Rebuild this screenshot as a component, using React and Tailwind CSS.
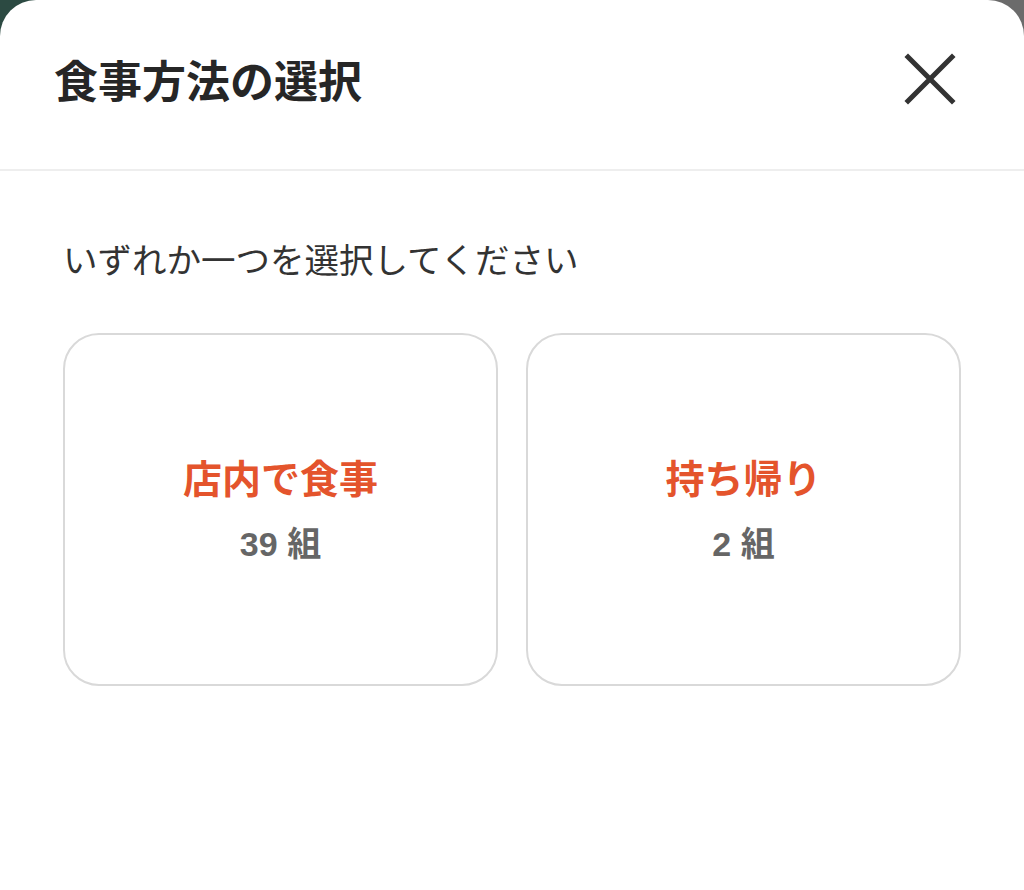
import React, { useState } from 'react';

const options = [
  { id: 'eat_in', label: '店内で食事', count: 39 },
  { id: 'take_out', label: '持ち帰り', count: 2 },
];

export default function App() {
  const [selected, setSelected] = useState(null);

  return (
    <div
      className="h-[890px] w-full overflow-hidden bg-[linear-gradient(to_right,#2c4a42_50%,#6b6b6b_50%)]"
      style={{ fontFamily: '"Noto Sans CJK JP", "Noto Sans", sans-serif' }}
    >
      <div className="flex h-full flex-col rounded-t-[36px] bg-white">
        {/* Header */}
        <div className="flex h-[171px] items-center justify-between border-b-2 border-[#eeeeee] pb-[12px] pl-[54px] pr-[68px]">
          <h2 className="text-[44px] font-bold leading-none text-[#262626]">食事方法の選択</h2>
          <button className="flex h-[52px] w-[52px] items-center justify-center text-[#333333]">
            <svg width="52" height="52" viewBox="0 0 52 52" fill="none">
              <path d="M4 4L48 48M48 4L4 48" stroke="currentColor" strokeWidth="5" strokeLinecap="square" />
            </svg>
          </button>
        </div>

        {/* Body */}
        <div className="px-[63px] pt-[62px]">
          <p className="text-[34.5px] leading-[51px] text-[#333333]">いずれか一つを選択してください</p>

          <div className="mt-[49px] grid grid-cols-2 gap-[28px]">
            {options.map((opt) => (
              <button
                key={opt.id}
                onClick={() => setSelected(opt.id)}
                className={`flex h-[353px] flex-col items-center justify-center rounded-[36px] border-2 bg-white pb-[3px] ${
                  selected === opt.id ? 'border-[#e4542c]' : 'border-[#d9d9d9]'
                }`}
              >
                <span className="text-[39px] font-bold leading-[56px] text-[#e4542c]">{opt.label}</span>
                <span
                  className="mt-[16px] text-[34px] font-bold leading-[48px] text-[#666666]"
                  style={{ fontFamily: '"Liberation Sans", "Noto Sans CJK JP", sans-serif' }}
                >
                  {opt.count} 組
                </span>
              </button>
            ))}
          </div>
        </div>
      </div>
    </div>
  );
}
